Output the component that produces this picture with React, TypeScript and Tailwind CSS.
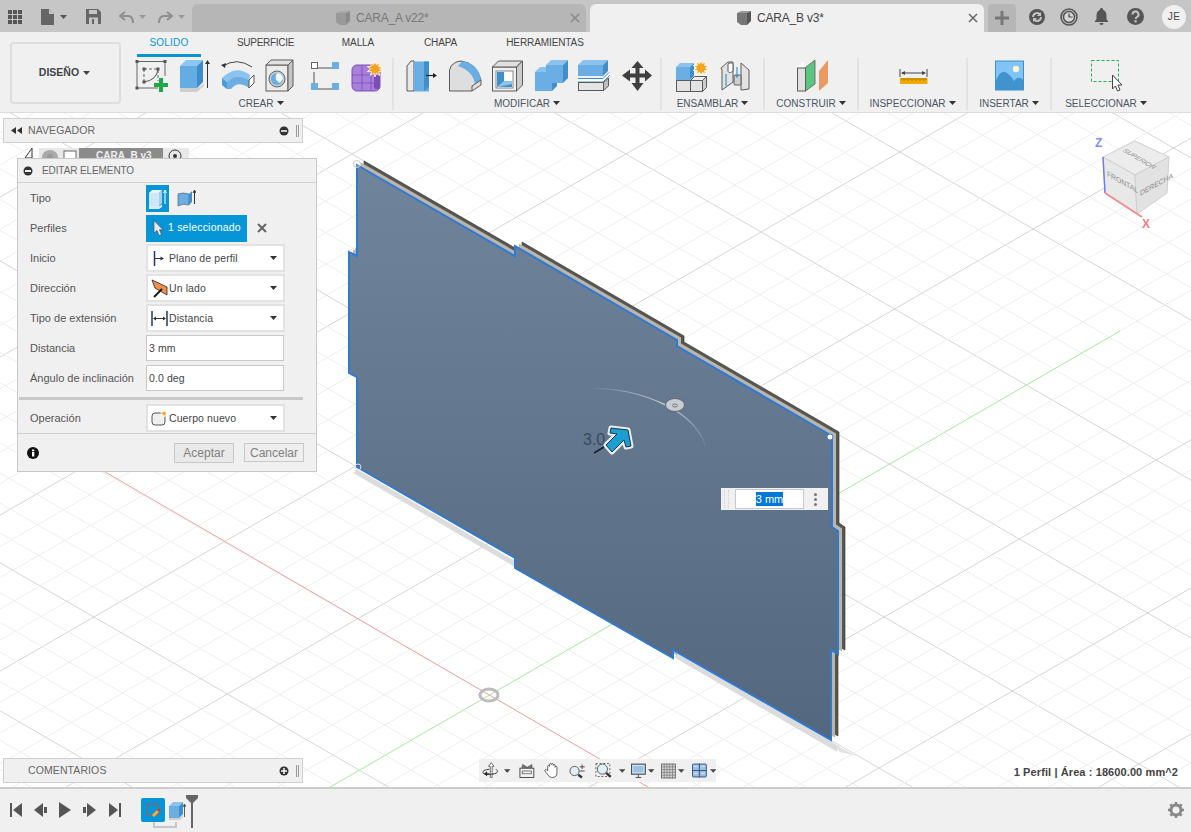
import React from "react";

const BLUE = "#6aaee3";
const BLUED = "#3f8fcb";
const BLUEL = "#8cc3ee";
const EDGE = "#5a5a5a";

function Caret({ className = "" }: { className?: string }) {
  return (
    <svg width="7" height="4" viewBox="0 0 7 4" className={className}>
      <path d="M0 0H7L3.5 4Z" fill="currentColor" />
    </svg>
  );
}

function Cell({ w = 43, children }: { w?: number; children: React.ReactNode }) {
  return (
    <svg width={w} height="36" viewBox={`0 0 ${w} 36`} className="shrink-0">
      {children}
    </svg>
  );
}

function Star({ x, y, r = 7 }: { x: number; y: number; r?: number }) {
  const pts: string[] = [];
  for (let i = 0; i < 20; i++) {
    const a = (i * Math.PI) / 10;
    const d = i % 2 === 0 ? r : r * 0.55;
    pts.push(`${(x + d * Math.sin(a)).toFixed(1)},${(y - d * Math.cos(a)).toFixed(1)}`);
  }
  return <polygon points={pts.join(" ")} fill="#f5a31a" stroke="#fff" strokeWidth="0.8" />;
}

function Cube({ x, y, w, h, d, f = BLUE, t = BLUEL, s = BLUED, e = "none" }: { x: number; y: number; w: number; h: number; d: number; f?: string; t?: string; s?: string; e?: string }) {
  return (
    <g stroke={e} strokeWidth="1">
      <rect x={x} y={y} width={w} height={h} fill={f} />
      <polygon points={`${x},${y} ${x + d},${y - d} ${x + w + d},${y - d} ${x + w},${y}`} fill={t} />
      <polygon points={`${x + w},${y} ${x + w + d},${y - d} ${x + w + d},${y + h - d} ${x + w},${y + h}`} fill={s} />
    </g>
  );
}

const Sq = ({ x, y }: { x: number; y: number }) => <rect x={x - 1.5} y={y - 1.5} width="3" height="3" fill="#555" />;

function SketchIcon() {
  return (
    <Cell>
      <g stroke="#666" strokeWidth="1" fill="none">
        <path d="M7 3.5H35M7 3.5V30M7 30H28M35 3.5V18" />
        <path d="M14 11H28V23" strokeDasharray="3 2" />
        <path d="M14 11V23" strokeDasharray="3 2" />
        <path d="M14 24Q27 22 28 11" stroke="#555" />
      </g>
      <Sq x={7} y={3.5} /><Sq x={35} y={3.5} /><Sq x={7} y={30} /><Sq x={14} y={11} /><Sq x={28} y={11} /><Sq x={14} y={24} />
      <path d="M29 20h4v5h5v4h-5v5h-4v-5h-5v-4h5z" fill="#1ea84b" />
    </Cell>
  );
}
function ExtrudeIcon() {
  return (
    <Cell>
      <polygon points="7,30 24,30 31,26 31,28 24,34 7,34" fill="#cfcfcf" />
      <Cube x={7} y={8} w={17} h={22} d={6} f="#64ace4" t="#8ec6f0" s="#3d8dc9" />
      <path d="M34.5 30V5" stroke="#333" strokeWidth="1" />
      <path d="M34.5 2l-2.5 4h5z" fill="#333" />
    </Cell>
  );
}
function RevolveIcon() {
  return (
    <Cell>
      <path d="M7 8Q21 -1 36 9" fill="none" stroke="#444" strokeWidth="1" />
      <path d="M5 7l5-2-1 5z" fill="#333" />
      <path d="M6 20Q20 6 34 17L33 22Q20 14 11 24Z" fill="#8cc3ee" />
      <path d="M6 20L6 27Q8 29 11 31L11 24Z" fill="#4c9ad6" />
      <path d="M11 24Q20 14 33 22L33 30Q22 22 15 31L11 31Z" fill="#6aaee3" />
      <path d="M33 22L38 17V25L33 30Z" fill="#fff" stroke="#555" strokeWidth="1" />
    </Cell>
  );
}
function HoleIcon() {
  return (
    <Cell>
      <Cube x={7} y={7} w={22} h={26} d={5} f="#ececec" t="#e2e2e2" s="#c4c4c4" e={EDGE} />
      <circle cx="18" cy="21" r="8" fill="#c8c8c8" stroke="#666" />
      <circle cx="18" cy="21" r="6" fill="#69ade2" />
      <path d="M18 15A6 6 0 0 1 24 21L21 25Q14 22 18 15Z" fill="#fff" opacity="0.9" />
    </Cell>
  );
}
function FormIcon() {
  return (
    <Cell>
      <path d="M14 10H30M12 14V28M15 31H30" stroke="#555" strokeWidth="1" />
      <rect x="9.5" y="4.5" width="6" height="6" fill="#fff" stroke="#666" />
      <rect x="30" y="4" width="7" height="7" fill={BLUE} />
      <rect x="9" y="25" width="7" height="7" fill={BLUE} />
      <rect x="30" y="25" width="7" height="7" fill={BLUE} />
    </Cell>
  );
}
function PurpleIcon() {
  return (
    <Cell>
      <rect x="7" y="7" width="28" height="26" rx="5" fill="#a97fdc" stroke="#7a4fb5" />
      <path d="M7 17H29M7 25H29M17 7V33M26 7V33" stroke="#7a4fb5" strokeWidth="0.8" />
      <rect x="29" y="17" width="6" height="14" rx="2" fill="#7a4fb5" />
      <Star x={30} y={11} r={8} />
    </Cell>
  );
}
function PressPullIcon() {
  return (
    <Cell>
      <polygon points="6,8 10,3 13,3 13,33 6,33" fill="#e8e8e8" stroke={EDGE} />
      <rect x="13" y="3.5" width="15" height="30" fill={BLUE} />
      <polygon points="23,3.5 28,3.5 28,29 23,33" fill={BLUED} />
      <path d="M25 17.5H33" stroke="#222" strokeWidth="1.2" />
      <path d="M36 17.5l-4-2.5v5z" fill="#222" />
    </Cell>
  );
}
function FilletIcon() {
  return (
    <Cell>
      <path d="M5.5 33V12Q6 7 12 4L17 3Q33 5 37 22V27L28 33Z" fill="#dedede" stroke={EDGE} />
      <path d="M18 3.5Q34 5 37 22L31 26Q29 13 14 8Z" fill={BLUE} />
      <path d="M28 33V28L37 22" stroke={EDGE} fill="none" />
    </Cell>
  );
}
function ShellIcon() {
  return (
    <Cell>
      <Cube x={5.5} y={9} w={24} h={24} d={6} f="#efefef" t="#e0e0e0" s="#cbcbcb" e={EDGE} />
      <rect x="9" y="13" width="17" height="17" fill="#fff" stroke="#888" />
      <polygon points="10,14 17,14 17,23 25,23 25,29 10,29" fill={BLUED} />
      <polygon points="17,23 25,23 25,26 12,29 10,29" fill={BLUEL} />
    </Cell>
  );
}
function CombineIcon() {
  return (
    <Cell>
      <Cube x={5} y={14} w={17} h={19} d={5} />
      <Cube x={16} y={7} w={17} h={18} d={5} />
    </Cell>
  );
}
function SplitIcon() {
  return (
    <Cell>
      <Cube x={5} y={7} w={25} h={11} d={5} />
      <path d="M5 23 L30 23 L37 16" stroke="#fff" strokeWidth="3" fill="none" />
      <path d="M5 20.5 H30 L36 14.5 M5 24 H30 L37 17" stroke="#3c92d4" strokeWidth="1" fill="none" />
      <rect x="5.5" y="24.5" width="25" height="8" fill="#e4e4e4" stroke={EDGE} />
      <polygon points="30.5,24.5 35.5,20 35.5,28 30.5,32.5" fill="#bdbdbd" stroke={EDGE} />
    </Cell>
  );
}
function MoveIcon() {
  return (
    <Cell>
      <path d="M21.5 3l6 7h-4v5.5h5.5v-4l7 6-7 6v-4h-5.5V25h4l-6 8-6-8h4v-5.5H14v4l-8-6 8-6v4h5.5V10h-4z" fill="#3f3f3f" />
    </Cell>
  );
}
function NewCompIcon() {
  return (
    <Cell w={42}>
      <rect x="5.5" y="22.5" width="14" height="11" fill="#e3e3e3" stroke={EDGE} />
      <Cube x={19.5} y={22.5} w={12} h={11} d={4} f="#e3e3e3" t="#eee" s="#cdcdcd" e={EDGE} />
      <Cube x={5} y={9} w={14} h={13} d={4} />
      <Star x={30} y={10} r={8} />
    </Cell>
  );
}
function JointIcon() {
  return (
    <Cell w={42}>
      <path d="M8 10L15 4H20V24L9 32V12Z" fill="#e3e3e3" stroke={EDGE} />
      <path d="M15 6c3-2 5-1 5 1v6c-2 2-5 2-5 0z" fill="#fff" stroke={EDGE} />
      <path d="M36 12L28 5V32L36 31Z" fill="#e3e3e3" stroke={EDGE} />
      <rect x="21" y="17" width="7" height="10" rx="1" fill="#cfcfcf" stroke={EDGE} />
      <path d="M13 16V28M24 9V18" stroke="#3c92d4" strokeWidth="1.2" />
      <path d="M24 20l-2-3h4z" fill="#3c92d4" />
    </Cell>
  );
}
function ConstructIcon() {
  return (
    <Cell w={40}>
      <polygon points="6,9 13,3 13,27 6,33" fill="#fff" />
      <rect x="6.5" y="10" width="8" height="23" fill="#e0e0e0" stroke={EDGE} />
      <polygon points="14.5,9.5 24,2 24,26 14.5,33" fill="#5cc680" stroke={EDGE} strokeWidth="0.8" />
      <polygon points="28,13 37,2 37,25 28,33" fill="#e89a62" />
    </Cell>
  );
}
function RulerIcon() {
  return (
    <Cell w={40}>
      <path d="M7 11V19M34 11V19M9 15H32" stroke="#444" strokeWidth="1" />
      <path d="M8 15l4-2v4zM33 15l-4-2v4z" fill="#444" />
      <rect x="7" y="20" width="27.5" height="6" fill="#f2a900" />
      <path d="M9 20v2M11 20v3M13 20v2M15 20v3M17 20v2M19 20v3M21 20v2M23 20v3M25 20v2M27 20v3M29 20v2M31 20v3M33 20v2" stroke="#7a5500" strokeWidth="0.6" />
    </Cell>
  );
}
function PictureIcon() {
  return (
    <Cell w={40}>
      <rect x="6.5" y="3" width="28" height="29" fill="#80c4f8" stroke="#3d8fcb" />
      <circle cx="27" cy="11" r="3.2" fill="#fbf6c8" />
      <path d="M6.5 24Q11 12 16 14T25 23Q29 17 34.5 22V32H6.5Z" fill="#3f93ce" />
    </Cell>
  );
}
function SelectIcon() {
  return (
    <Cell w={46}>
      <rect x="8.5" y="2.500" width="27" height="21" fill="none" stroke="#21ad5b" strokeDasharray="3 2" />
      <path d="M29.500 17V31L32.500 28L34.500 33L37 32L35 27H39Z" fill="#fff" stroke="#444" />
    </Cell>
  );
}

function Group({ label, w, children, last, pl = 0 }: { label: string; w: number; children: React.ReactNode; last?: boolean; pl?: number }) {
  return (
    <div className={`flex flex-col shrink-0 items-center h-[52px] ${w === 264 ? "w-[264px]" : w === 268 ? "w-[268px]" : w === 103 ? "w-[103px]" : w === 94 ? "w-[94px]" : w === 109 ? "w-[109px]" : w === 84 ? "w-[84px]" : "w-[108px]"} ${last ? "" : "border-r-2 border-[#e2e2e2]"}`}>
      <div className={`flex h-[36px] w-full justify-center ${pl ? "pl-[5px]" : ""}`}>{children}</div>
      <div className="mt-[3px] flex items-center gap-[3px] text-[10px] leading-[14px] text-[#4b5563]">
        <span>{label}</span>
        <Caret className="text-[#333] mb-[2px]" />
      </div>
    </div>
  );
}

function Tab({ name, active }: { name: string; active?: boolean }) {
  return (
    <div className={`flex items-center h-[28px] rounded-t-[6px] w-[394px] text-[12px] tracking-[-0.2px] ${active ? "bg-[#f0f0f0] text-[#444] pl-[146px]" : "bg-[#b6b6b6] text-[#777] pl-[143px]"}`}>
      <svg width="16" height="16" viewBox="0 0 16 16">
        <polygon points="1,3 11,3 11,15 5,15 1,12" fill={active ? "#777" : "#999"} />
        <polygon points="1,3 5,1 15,1 11,3" fill={active ? "#999" : "#aaa"} />
        <polygon points="11,3 15,1 15,11 11,15" fill={active ? "#555" : "#8a8a8a"} />
      </svg>
      <span className="ml-[5px]">{name}</span>
      <svg width="10" height="10" viewBox="0 0 10 10" className="ml-auto mr-[6px]">
        <path d="M1 1L9 9M9 1L1 9" stroke={active ? "#666" : "#888"} strokeWidth="1.5" />
      </svg>
    </div>
  );
}

function TopBar() {
  return (
    <div className="flex h-[32px] shrink-0 items-end bg-[#c6c6c6]">
      <div className="flex h-[32px] w-[192px] shrink-0 items-center pl-[8px] pt-[1px]">
        <svg width="14" height="14" viewBox="0 0 14 14" className="mr-[19px]">
          <path d="M0 0h4v4H0zM5 0h4v4H5zM10 0h4v4h-4zM0 5h4v4H0zM5 5h4v4H5zM10 5h4v4h-4zM0 10h4v4H0zM5 10h4v4H5zM10 10h4v4h-4z" fill="#555" />
        </svg>
        <svg width="13" height="16" viewBox="0 0 13 16" className="mr-[6px]">
          <path d="M0 0H8L13 5V16H0Z" fill="#666" />
          <path d="M8 0V5H13Z" fill="#c6c6c6" />
        </svg>
        <Caret className="text-[#555] mr-[19px]" />
        <svg width="15" height="15" viewBox="0 0 15 15" className="mr-[18px]">
          <path d="M0 0H12L15 3V15H0Z" fill="#666" />
          <rect x="3" y="1" width="8" height="4" fill="#c6c6c6" />
          <rect x="3" y="8.5" width="9" height="6.5" fill="#c6c6c6" />
          <rect x="6" y="10" width="2" height="5" fill="#666" />
        </svg>
        <svg width="15" height="12" viewBox="0 0 15 12" className="mr-[5px]">
          <path d="M6 1L1 5L6 9M1 5H9Q14 5 14 12" fill="none" stroke="#8f8f8f" strokeWidth="2" />
        </svg>
        <Caret className="text-[#999] mr-[12px]" />
        <svg width="15" height="12" viewBox="0 0 15 12" className="mr-[5px]">
          <path d="M9 1L14 5L9 9M14 5H6Q1 5 1 12" fill="none" stroke="#8f8f8f" strokeWidth="2" />
        </svg>
        <Caret className="text-[#999]" />
      </div>
      <Tab name="CARA_A v22*" />
      <div className="w-[4px] shrink-0" />
      <Tab name="CARA_B v3*" active />
      <div className="ml-[4px] flex h-[28px] w-[28px] items-center justify-center rounded-t-[4px] bg-[#b6b6b6]">
        <svg width="14" height="14" viewBox="0 0 14 14"><path d="M5.5 0h3v5.5H14v3H8.5V14h-3V8.5H0v-3h5.5z" fill="#777" /></svg>
      </div>
      <div className="flex h-[32px] flex-1 items-center pl-[12px] pt-[1px]">
        <svg width="18" height="18" viewBox="0 0 18 18" className="mr-[14px]">
          <circle cx="9" cy="9" r="8" fill="#555" />
          <path d="M4 9a5 5 0 0 1 8-4l1-1v4H9l1.500-1.500A3 3 0 0 0 6 9zM14 9a5 5 0 0 1-8 4l-1 1v-4h4l-1.500 1.500A3 3 0 0 0 12 9z" fill="#c6c6c6" />
        </svg>
        <svg width="18" height="18" viewBox="0 0 18 18" className="mr-[16px]">
          <circle cx="9" cy="9" r="8" fill="#bbb" stroke="#555" strokeWidth="1.500" />
          <circle cx="9" cy="9" r="5.5" fill="#d8d8d8" stroke="#555" strokeWidth="1.500" />
          <path d="M9 5.5V9H12.500" fill="none" stroke="#444" strokeWidth="1.200" />
        </svg>
        <svg width="15" height="17" viewBox="0 0 15 17" className="mr-[18px]">
          <path d="M7.5 0a1.500 1.500 0 0 1 1.500 1.700C11.500 2.500 12.500 5 12.500 7.500V11l2 3H.5l2-3V7.500C2.500 5 3.500 2.500 6 1.700A1.500 1.500 0 0 1 7.500 0zM5.500 15h4a2 2 0 0 1-4 0z" fill="#555" />
        </svg>
        <svg width="17" height="17" viewBox="0 0 17 17" className="mr-[18px]">
          <circle cx="8.500" cy="8.500" r="8.500" fill="#555" />
          <path d="M5.500 6.500a3 3 0 1 1 4.500 2.500c-1 .6-1.300 1-1.300 2" fill="none" stroke="#c6c6c6" strokeWidth="2" />
          <rect x="7.500" y="12.200" width="2.200" height="2.200" fill="#c6c6c6" />
        </svg>
        <div className="flex h-[24px] w-[24px] items-center justify-center rounded-full bg-[#f0f0f0] text-[10px] tracking-[0.5px] text-[#444]">JE</div>
      </div>
    </div>
  );
}

const TABS = [
  { n: "SOLIDO", c: "w-[64px] ml-[7px] text-[#0696d7] border-[#0696d7] tracking-[0.2px]" },
  { n: "SUPERFICIE", c: "w-[56px] ml-[36px] text-[#444] border-transparent tracking-[-0.3px]" },
  { n: "MALLA", c: "w-[36px] ml-[47px] text-[#444] border-transparent tracking-[-0.1px]" },
  { n: "CHAPA", c: "w-[35px] ml-[47px] text-[#444] border-transparent tracking-[-0.1px]" },
  { n: "HERRAMIENTAS", c: "w-[78px] ml-[48px] text-[#444] border-transparent tracking-[-0.1px]" },
];

function Toolbar() {
  return (
    <div className="flex h-[81px] shrink-0 bg-[#f0f0f0] border-b border-[#dcdcdc]">
      <div className="ml-[10px] mt-[10px] flex h-[62px] w-[111px] shrink-0 items-center justify-center gap-[4px] rounded-[4px] border-2 border-[#dedede] pr-[2px] text-[10.500px] font-bold text-[#444]">
        <span>DISEÑO</span>
        <Caret className="text-[#444]" />
      </div>
      <div className="ml-[9px] flex flex-col">
        <div className="flex h-[25px] items-end">
          {TABS.map((t) => (
            <div key={t.n} className={`h-[20px] whitespace-nowrap border-b-[3px] text-center text-[10px] leading-[12px] ${t.c}`}>{t.n}</div>
          ))}
        </div>
        <div className="mt-[1px] flex">
          <Group label="CREAR" w={264}>
            <div className="flex w-full"><SketchIcon /><ExtrudeIcon /><RevolveIcon /><HoleIcon /><FormIcon /><PurpleIcon /></div>
          </Group>
          <Group label="MODIFICAR" w={268} pl={5}>
            <div className="flex"><PressPullIcon /><FilletIcon /><ShellIcon /><CombineIcon /><SplitIcon /><MoveIcon /></div>
          </Group>
          <Group label="ENSAMBLAR" w={103}><NewCompIcon /><JointIcon /></Group>
          <Group label="CONSTRUIR" w={94}><ConstructIcon /></Group>
          <Group label="INSPECCIONAR" w={109}><RulerIcon /></Group>
          <Group label="INSERTAR" w={84}><PictureIcon /></Group>
          <Group label="SELECCIONAR" w={108} last><SelectIcon /></Group>
        </div>
      </div>
    </div>
  );
}

const PLATE = "357,165 515,256 515,246 677,340 677,346 832,436 832,527 838,531 838,654 831,650 831,740 673,650 673,658 515,568 515,558 357,467 357,377 349,373 349,252 357,256";

function gridLines() {
  const out: React.ReactNode[] = [];
  const s = 0.577;
  for (let k = -34; k <= 16; k++) {
    const off = 30.2 * k - 0.04 * k * k;
    const major = k % 5 === 0 && k !== 0;
    const col = major ? "#d6d6d6" : "#efefef";
    const b = 695 + off;
    out.push(<line key={`r${k}`} x1={0} y1={b + s * (0 - 489)} x2={1191} y2={b + s * (1191 - 489)} stroke={col} strokeWidth="1" />);
    out.push(<line key={`g${k}`} x1={0} y1={b - s * (0 - 489)} x2={1191} y2={b - s * (1191 - 489)} stroke={col} strokeWidth="1" />);
  }
  return out;
}

function Scene() {
  return (
    <svg width="1191" height="674" viewBox="0 113 1191 674" className="absolute inset-0">
      <defs>
        <linearGradient id="plate" gradientUnits="userSpaceOnUse" x1="0" y1="165" x2="0" y2="740">
          <stop offset="0" stopColor="#70849c" />
          <stop offset="1" stopColor="#53677f" />
        </linearGradient>
        <linearGradient id="arc" gradientUnits="userSpaceOnUse" x1="587" y1="388" x2="707" y2="453">
          <stop offset="0" stopColor="#d4d9de" stopOpacity="0" />
          <stop offset="0.55" stopColor="#d4d9de" stopOpacity="0.9" />
          <stop offset="1" stopColor="#d4d9de" stopOpacity="0" />
        </linearGradient>
      </defs>
      {gridLines()}
      <line x1="100" y1="469" x2="660" y2="794" stroke="#f4a0a0" strokeWidth="1" />
      <line x1="320" y1="793" x2="1120" y2="331" stroke="#a9f0a0" strokeWidth="1" />
      <ellipse cx="489" cy="695" rx="9" ry="6" fill="none" stroke="#bdbdbd" strokeWidth="3" />
      <path d="M355 471L515 564" stroke="#dcdcdc" strokeWidth="5" />
      <path d="M676 655L838 749" stroke="#dcdcdc" strokeWidth="6" />
      <path d="M834 744L856 756L840 752Z" fill="#e2e2e2" />
      <polygon points={PLATE} transform="translate(7,-4)" fill="#5a5750" stroke="#2c2c2c" strokeWidth="0.6" />
      <polygon points={PLATE} transform="translate(4,-2.500)" fill="#b8b6ae" />
      <polygon points={PLATE} fill="url(#plate)" stroke="#2f78d4" strokeWidth="2" />
      <circle cx="357" cy="164" r="3.500" fill="#fff" fillOpacity="0.2" stroke="#ccc" />
      <circle cx="358" cy="467" r="3" fill="none" stroke="#ddd" />
      <circle cx="830" cy="437" r="3" fill="#fff" stroke="#4a7ac0" />
      <path d="M587 388C640 388 700 410 707 453" fill="none" stroke="url(#arc)" strokeWidth="1.200" />
      <ellipse cx="675" cy="405" rx="9.500" ry="6.500" fill="#c9cdd2" stroke="#5d6672" />
      <ellipse cx="675" cy="405.500" rx="2.500" ry="1.500" fill="none" stroke="#777" />
      <text x="583" y="445" fontSize="16" fill="#3a4a60" fontFamily="'Liberation Sans', sans-serif">3.0</text>
      <path d="M594 453L604 447" stroke="#14202e" strokeWidth="1.500" />
      <path d="M606 445L617 434L610 433L611 428L628 430L631 446L626 447L624 440L612 452Z" fill="#e8edf2" stroke="#e8edf2" strokeWidth="5" strokeLinejoin="round" />
      <path d="M606 445L617 434L610 433L611 428L628 430L631 446L626 447L624 440L612 452Z" fill="#199fd0" stroke="#1d3448" strokeWidth="1" strokeLinejoin="round" />
      <g>
        <polygon points="1103,157 1135,141 1169,157 1135,175" fill="#ececec" stroke="#cfcfcf" />
        <polygon points="1103,157 1135,175 1137,214 1105,193" fill="#e8e8e8" stroke="#cfcfcf" />
        <polygon points="1135,175 1169,157 1167,193 1137,214" fill="#e2e2e2" stroke="#cfcfcf" />
        <text x="0" y="0" transform="matrix(0.85 0.5 -0.85 0.5 1122 151)" fontSize="7" fill="#8a8a8a" fontFamily="'Liberation Sans', sans-serif">SUPERIOR</text>
        <text x="0" y="0" transform="matrix(0.9 0.5 0 1 1107 176)" fontSize="7.500" fill="#8a8a8a" fontFamily="'Liberation Sans', sans-serif">FRONTAL</text>
        <text x="0" y="0" transform="matrix(0.9 -0.5 0 1 1140 196)" fontSize="7.500" fill="#8a8a8a" fontFamily="'Liberation Sans', sans-serif">DERECHA</text>
        <line x1="1103" y1="157" x2="1105" y2="193" stroke="#6f7fe8" strokeWidth="1.500" />
        <line x1="1105" y1="193" x2="1142" y2="217" stroke="#ee8f8f" strokeWidth="2" />
        <text x="1095" y="147" fontSize="12" fontWeight="700" fill="#7f8fee" fontFamily="'Liberation Sans', sans-serif">Z</text>
        <text x="1142" y="228" fontSize="12" fontWeight="700" fill="#ee8080" fontFamily="'Liberation Sans', sans-serif">X</text>
      </g>
    </svg>
  );
}

function Row({ label, children }: { label: string; children: React.ReactNode }) {
  return (
    <div className="flex h-[30px] shrink-0 items-center pl-[12px] text-[11px] text-[#555]">
      <div className="w-[116px] shrink-0 whitespace-nowrap">{label}</div>
      {children}
    </div>
  );
}

function Select({ icon, text }: { icon: React.ReactNode; text: string }) {
  return (
    <div className="flex h-[28px] w-[139px] items-center border-2 border-[#e2e2e2] bg-white pl-[1px] pr-[6px] text-[10.500px] tracking-[0.1px] text-[#444]">
      <div className="flex w-[20px] shrink-0 justify-center">{icon}</div>
      <span className="pt-[1px]">{text}</span>
      <Caret className="ml-auto text-[#333]" />
    </div>
  );
}

function Field({ value }: { value: string }) {
  return (
    <div className="flex h-[26px] w-[138px] items-center border border-[#c8c8c8] bg-white pl-[2px] pt-[1px] text-[10.500px] tracking-[0.1px] text-[#444]">{value}</div>
  );
}

function EditPanel() {
  return (
    <div className="absolute left-[17px] top-[45px] flex h-[314px] w-[300px] flex-col border border-[#c8c8c8] bg-[#f0f0f0]">
      <div className="flex h-[24px] shrink-0 items-center gap-[9px] border-b border-[#d2d2d2] pl-[5px] text-[10px] tracking-[-0.1px] text-[#666]">
        <svg width="10" height="10" viewBox="0 0 10 10"><circle cx="5" cy="5" r="4.500" fill="#333" /><rect x="2" y="4" width="6" height="2" fill="#f0f0f0" /></svg>
        <span>EDITAR ELEMENTO</span>
      </div>
      <Row label="Tipo">
        <div className="flex h-[27px] w-[23px] items-center justify-center bg-[#0696d7]">
          <svg width="19" height="21" viewBox="0 0 19 21">
            <polygon points="1,18 12,18 14,16 14,19 11,21 1,21" fill="#d8eaf6" />
            <Cube x={1} y={5} w={10} h={13} d={3} f="#cfe6f7" t="#e8f4fc" s="#a5cfee" />
            <path d="M17 16V3M15.500 5L17 2L18.500 5" stroke="#fff" fill="none" />
          </svg>
        </div>
        <svg width="19" height="21" viewBox="0 0 19 21" className="ml-[8px]">
          <path d="M1 6Q6 4 12 6V17Q6 15 1 18Z" fill={BLUE} stroke="#456" strokeWidth="0.6" />
          <path d="M12 6L15 3V14L12 17Z" fill={BLUED} />
          <path d="M17.500 16V3M16 5L17.500 2L19 5" stroke="#333" fill="none" />
        </svg>
      </Row>
      <Row label="Perfiles">
        <div className="flex h-[27px] w-[101px] items-center gap-[4px] bg-[#0696d7] pl-[7px] text-[10.500px] tracking-[0.2px] text-white">
          <svg width="11" height="16" viewBox="0 0 11 16"><path d="M1 0.500V13L4 10.500L6 15.500L8.500 14.500L6.500 9.800H10Z" fill="#e8e8e8" stroke="#444" strokeWidth="0.600" /></svg>
          <span>1 seleccionado</span>
        </div>
        <svg width="10" height="10" viewBox="0 0 10 10" className="ml-[10px]"><path d="M1 1L9 9M9 1L1 9" stroke="#666" strokeWidth="2" /></svg>
      </Row>
      <Row label="Inicio">
        <Select text="Plano de perfil" icon={<svg width="14" height="15" viewBox="0 0 14 15"><path d="M2.500 0V15" stroke="#1f3a6a" strokeWidth="1.500" /><path d="M3 7.500H9" stroke="#333" /><path d="M12 7.500L8.500 5.500V9.500Z" fill="#333" /></svg>} />
      </Row>
      <Row label="Dirección">
        <Select text="Un lado" icon={<svg width="17" height="19" viewBox="0 0 17 19"><polygon points="1,1 16,8 16,16 4,9" fill="#ef8f4a" stroke="#222" strokeWidth="0.800" /><path d="M11 10L3 18" stroke="#111" strokeWidth="1.800" /></svg>} />
      </Row>
      <Row label="Tipo de extensión">
        <Select text="Distancia" icon={<svg width="17" height="15" viewBox="0 0 17 15"><path d="M1 0V15M16 0V15" stroke="#1f3a6a" strokeWidth="1.500" /><path d="M3 7.500H14" stroke="#333" /><path d="M2 7.500L5 5.500V9.500ZM15 7.500L12 5.500V9.500Z" fill="#333" /></svg>} />
      </Row>
      <Row label="Distancia"><Field value="3 mm" /></Row>
      <Row label="Ángulo de inclinación"><Field value="0.0 deg" /></Row>
      <div className="ml-[1px] mb-[3px] mt-[4px] h-[3px] w-[284px] shrink-0 bg-[#c8c8c8]" />
      <Row label="Operación">
        <Select text="Cuerpo nuevo" icon={<svg width="17" height="16" viewBox="0 0 17 16"><rect x="1" y="3" width="13" height="12" rx="3" fill="#efefef" stroke="#555" /><Star x={13} y={3.500} r={3.500} /></svg>} />
      </Row>
      <div className="flex flex-1 items-center border-t border-[#cfcfcf] pl-[9px] pr-[12px]">
        <svg width="12" height="12" viewBox="0 0 12 12"><circle cx="6" cy="6" r="6" fill="#111" /><rect x="5" y="5" width="2.300" height="4.500" fill="#fff" /><rect x="5" y="2.500" width="2.300" height="1.800" fill="#fff" /></svg>
        <div className="ml-auto flex h-[20px] w-[60px] items-center justify-center border border-[#c8c8c8] bg-[#e9e9e9] text-[12px] text-[#808080]">Aceptar</div>
        <div className="ml-[10px] flex h-[19px] w-[60px] items-center justify-center border border-[#c8c8c8] bg-[#eeeeee] text-[12px] text-[#808080]">Cancelar</div>
      </div>
    </div>
  );
}

function SidePanelBar({ title, className, expand }: { title: string; className: string; expand?: boolean }) {
  return (
    <div className={`absolute left-[3px] flex h-[25px] w-[300px] items-center border border-[#cfcfcf] bg-[#f0f0f0] text-[10.500px] tracking-[0.1px] text-[#666] ${className}`}>
      <div className="flex w-[24px] shrink-0 justify-center">
        {!expand && <svg width="11" height="7" viewBox="0 0 11 7"><path d="M5 0V7L0 3.500ZM11 0V7L6 3.500Z" fill="#333" /></svg>}
      </div>
      <span>{title}</span>
      <svg width="10" height="10" viewBox="0 0 10 10" className="ml-auto">
        <circle cx="5" cy="5" r="4.500" fill="#333" />
        <rect x="2" y="4.200" width="6" height="1.600" fill="#f0f0f0" />
        {expand && <rect x="4.200" y="2" width="1.600" height="6" fill="#f0f0f0" />}
      </svg>
      <div className="ml-[7px] mr-[3px] h-[12px] w-[3px] border-x border-[#999]" />
    </div>
  );
}

function BrowserPeek() {
  return (
    <div className="absolute left-[25px] top-[35px] flex h-[10px] items-start overflow-hidden">
      <svg width="8" height="10" viewBox="0 0 8 10"><path d="M7 0V10H0Z" fill="none" stroke="#333" /></svg>
      <div className="ml-[6px] flex h-[10px] w-[150px] items-start bg-[#e8e8e8]">
        <svg width="22" height="14" viewBox="0 0 22 14" className="ml-[2px] mt-[1px]"><ellipse cx="9" cy="8" rx="8" ry="7" fill="#aaa" /><circle cx="9" cy="8" r="3" fill="#999" /></svg>
        <svg width="16" height="12" viewBox="0 0 16 12"><rect x="1" y="3" width="12" height="9" fill="#fff" stroke="#666" /></svg>
        <div className="h-[10px] w-[84px] bg-[#8b8b8b] pl-[17px] pt-[3px] text-[10px] font-bold leading-[10px] text-[#f0f0f0]">CARA_B v3</div>
        <svg width="14" height="14" viewBox="0 0 14 14" className="ml-[5px] mt-[1px]"><circle cx="7" cy="7" r="6" fill="none" stroke="#333" /><circle cx="7" cy="7" r="2" fill="#333" /></svg>
      </div>
    </div>
  );
}

function ThreeMmBox() {
  return (
    <div className="absolute left-[721px] top-[375px] flex h-[22px] w-[107px] items-center bg-[#f0f0f0]">
      <div className="ml-[3px] mr-[6px] h-[18px] w-[5px] border-x border-dotted border-[#cfcfcf]" />
      <div className="flex h-[20px] w-[69px] items-center justify-center border border-[#c8c8c8] bg-white text-[11px]">
        <span className="bg-[#0078d7] text-white leading-[14px]">3 mm</span>
      </div>
      <div className="ml-[10px] flex flex-col gap-[2px]">
        <div className="h-[3px] w-[3px] rounded-full bg-[#777]" />
        <div className="h-[3px] w-[3px] rounded-full bg-[#777]" />
        <div className="h-[3px] w-[3px] rounded-full bg-[#777]" />
      </div>
    </div>
  );
}

function NavBar() {
  return (
    <div className="absolute left-[479px] top-[646px] flex h-[23px] w-[237px] items-center bg-[#f0f0f0] pl-[3px] text-[#444]">
      <svg width="20" height="18" viewBox="0 0 20 18" className="mr-[3px]">
        <path d="M10 0L13 4H11V16H9V4H7Z" fill="#fff" stroke="#444" strokeWidth="0.800" />
        <path d="M8 7Q0 8 1 11T14 12Q19 10 15 7" fill="none" stroke="#333" />
        <path d="M3 12H8M3 12L5 10V14Z" stroke="#222" fill="#222" />
      </svg>
      <Caret className="mr-[9px]" />
      <svg width="17" height="16" viewBox="0 0 17 16" className="mr-[9px]">
        <path d="M3 5L4 1L9 4L14 1V5" fill="#777" stroke="#555" strokeWidth="0.800" />
        <rect x="1" y="5" width="15" height="10" fill="#f2f2f2" stroke="#444" />
        <rect x="3.500" y="8" width="10" height="3" fill="#f0f0f0" stroke="#555" strokeWidth="0.800" />
      </svg>
      <svg width="17" height="17" viewBox="0 0 17 17" className="mr-[10px]">
        <path d="M4 9V4a1 1 0 0 1 2 0V2a1 1 0 0 1 2 0v0a1 1 0 0 1 2 0V3a1 1 0 0 1 2 0v2a1 1 0 0 1 2 0v6q0 5-5 5H8Q6 16 4 13L1 9a1 1 0 0 1 2-1z" fill="#fff" stroke="#444" strokeWidth="0.900" />
      </svg>
      <svg width="18" height="16" viewBox="0 0 18 16" className="mr-[9px]">
        <circle cx="6" cy="8" r="5" fill="#e2eef6" stroke="#555" />
        <path d="M10 12L14 15" stroke="#333" strokeWidth="2.500" />
        <path d="M11.500 3.500H17M14.200 1V6M11.500 8H17" stroke="#333" strokeWidth="0.900" />
      </svg>
      <svg width="19" height="17" viewBox="0 0 19 17" className="mr-[6px]">
        <rect x="1" y="1" width="15" height="14" fill="none" stroke="#555" strokeDasharray="2 2" />
        <circle cx="8" cy="7" r="5.500" fill="#e2eef6" stroke="#555" />
        <path d="M12 11L17 15.500" stroke="#333" strokeWidth="2.500" />
      </svg>
      <Caret className="mr-[6px]" />
      <svg width="16" height="16" viewBox="0 0 16 16" className="mr-[2px]">
        <rect x="0.500" y="0.500" width="15" height="11" fill="#8db3d9" stroke="#444" />
        <rect x="2" y="2" width="12" height="8" fill="#9ebfe0" stroke="#eaf2fa" strokeWidth="0.800" />
        <path d="M5 15H11M8 12V15" stroke="#444" />
      </svg>
      <Caret className="mr-[7px]" />
      <svg width="16" height="16" viewBox="0 0 16 16" className="mr-[2px]">
        <rect x="0.500" y="0.500" width="15" height="15" fill="#d8d8d8" stroke="#666" />
        <path d="M3.500 0V16M6.500 0V16M9.500 0V16M12.500 0V16M0 3.500H16M0 6.500H16M0 9.500H16M0 12.500H16" stroke="#777" strokeWidth="0.800" />
      </svg>
      <Caret className="mr-[7px]" />
      <svg width="16" height="15" viewBox="0 0 16 15" className="mr-[3px]">
        <rect x="0.500" y="0.500" width="15" height="14" rx="1" fill="#9ebfe0" stroke="#2f5488" />
        <path d="M8 0V15M0 7.500H16" stroke="#2f5488" />
        <path d="M2 3H6M10 3H14M2 10.500H6M10 10.500H14" stroke="#e6eef7" />
      </svg>
      <Caret />
    </div>
  );
}

function Viewport() {
  return (
    <div className="relative flex-1 overflow-hidden bg-white">
      <Scene />
      <ThreeMmBox />
      <BrowserPeek />
      <SidePanelBar title="NAVEGADOR" className="top-[5px]" />
      <EditPanel />
      <SidePanelBar title="COMENTARIOS" className="top-[645px]" expand />
      <NavBar />
      <div className="absolute right-[13px] top-[651px] text-[11px] font-bold tracking-[0.1px] text-[#444]">1 Perfil | Área : 18600.00 mm^2</div>
    </div>
  );
}

function Timeline() {
  const c = "#555";
  return (
    <div className="flex h-[45px] shrink-0 items-center border-t-2 border-[#cdcdcd] bg-[#f0f0f0] pb-[1px] pl-[10px]">
      <svg width="12" height="14" viewBox="0 0 12 14" className="mr-[12px]"><rect width="2" height="14" fill={c} /><path d="M12 0V14L3 7Z" fill={c} /></svg>
      <svg width="13" height="14" viewBox="0 0 13 14" className="mr-[12px]"><path d="M9 0V14L0 7Z" fill={c} /><rect x="10" y="4" width="3" height="6" fill={c} /></svg>
      <svg width="12" height="16" viewBox="0 0 12 16" className="mr-[12px]"><path d="M0 0V16L12 8Z" fill={c} /></svg>
      <svg width="13" height="14" viewBox="0 0 13 14" className="mr-[13px]"><rect y="4" width="3" height="6" fill={c} /><path d="M4 0V14L13 7Z" fill={c} /></svg>
      <svg width="12" height="14" viewBox="0 0 12 14" className="mr-[20px]"><path d="M0 0V14L9 7Z" fill={c} /><rect x="10" width="2" height="14" fill={c} /></svg>
      <div className="relative flex h-[24px] w-[24px] items-center justify-center rounded-[2px] bg-[#0696d7]">
        <svg width="18" height="18" viewBox="0 0 18 18">
          <rect x="3" y="3" width="11" height="11" fill="none" stroke="#a55" strokeWidth="1" />
          <path d="M9 15L14 10" stroke="#f0b040" strokeWidth="3" />
          <circle cx="15" cy="9" r="1.500" fill="#d33" />
        </svg>
        <div className="absolute left-[12px] top-[24px] h-[6px] w-[24px] border-x-2 border-b-2 border-[#c6c6c6]" />
      </div>
      <svg width="18" height="22" viewBox="0 0 18 22" className="ml-[3px]">
        <polygon points="1,19 12,19 15,16 15,18 12,21 1,21" fill="#cfcfcf" />
        <Cube x={1} y={7} w={10} h={12} d={4} />
        <path d="M16.500 18V6M15 8L16.500 5L18 8" stroke="#333" fill="none" strokeWidth="0.800" />
      </svg>
      <svg width="12" height="33" viewBox="0 0 12 33" className="mt-[2px]">
        <path d="M0 0H12V3L6 9L0 3Z" fill="#666" />
        <rect x="5" y="5" width="2" height="28" fill="#666" />
      </svg>
      <svg width="16" height="16" viewBox="0 0 16 16" className="ml-auto mr-[7px]">
        <circle cx="8" cy="8" r="5" fill="none" stroke="#888" strokeWidth="3" />
        <path d="M8 0V3M8 13V16M0 8H3M13 8H16M2.300 2.300L4.500 4.500M11.500 11.500L13.700 13.700M2.300 13.700L4.500 11.500M11.500 4.500L13.700 2.300" stroke="#888" strokeWidth="2.500" />
      </svg>
    </div>
  );
}

export default function App() {
  return (
    <div className="flex h-[832px] w-[1191px] flex-col overflow-hidden font-['Liberation_Sans',Arial,sans-serif]">
      <TopBar />
      <Toolbar />
      <Viewport />
      <Timeline />
    </div>
  );
}
